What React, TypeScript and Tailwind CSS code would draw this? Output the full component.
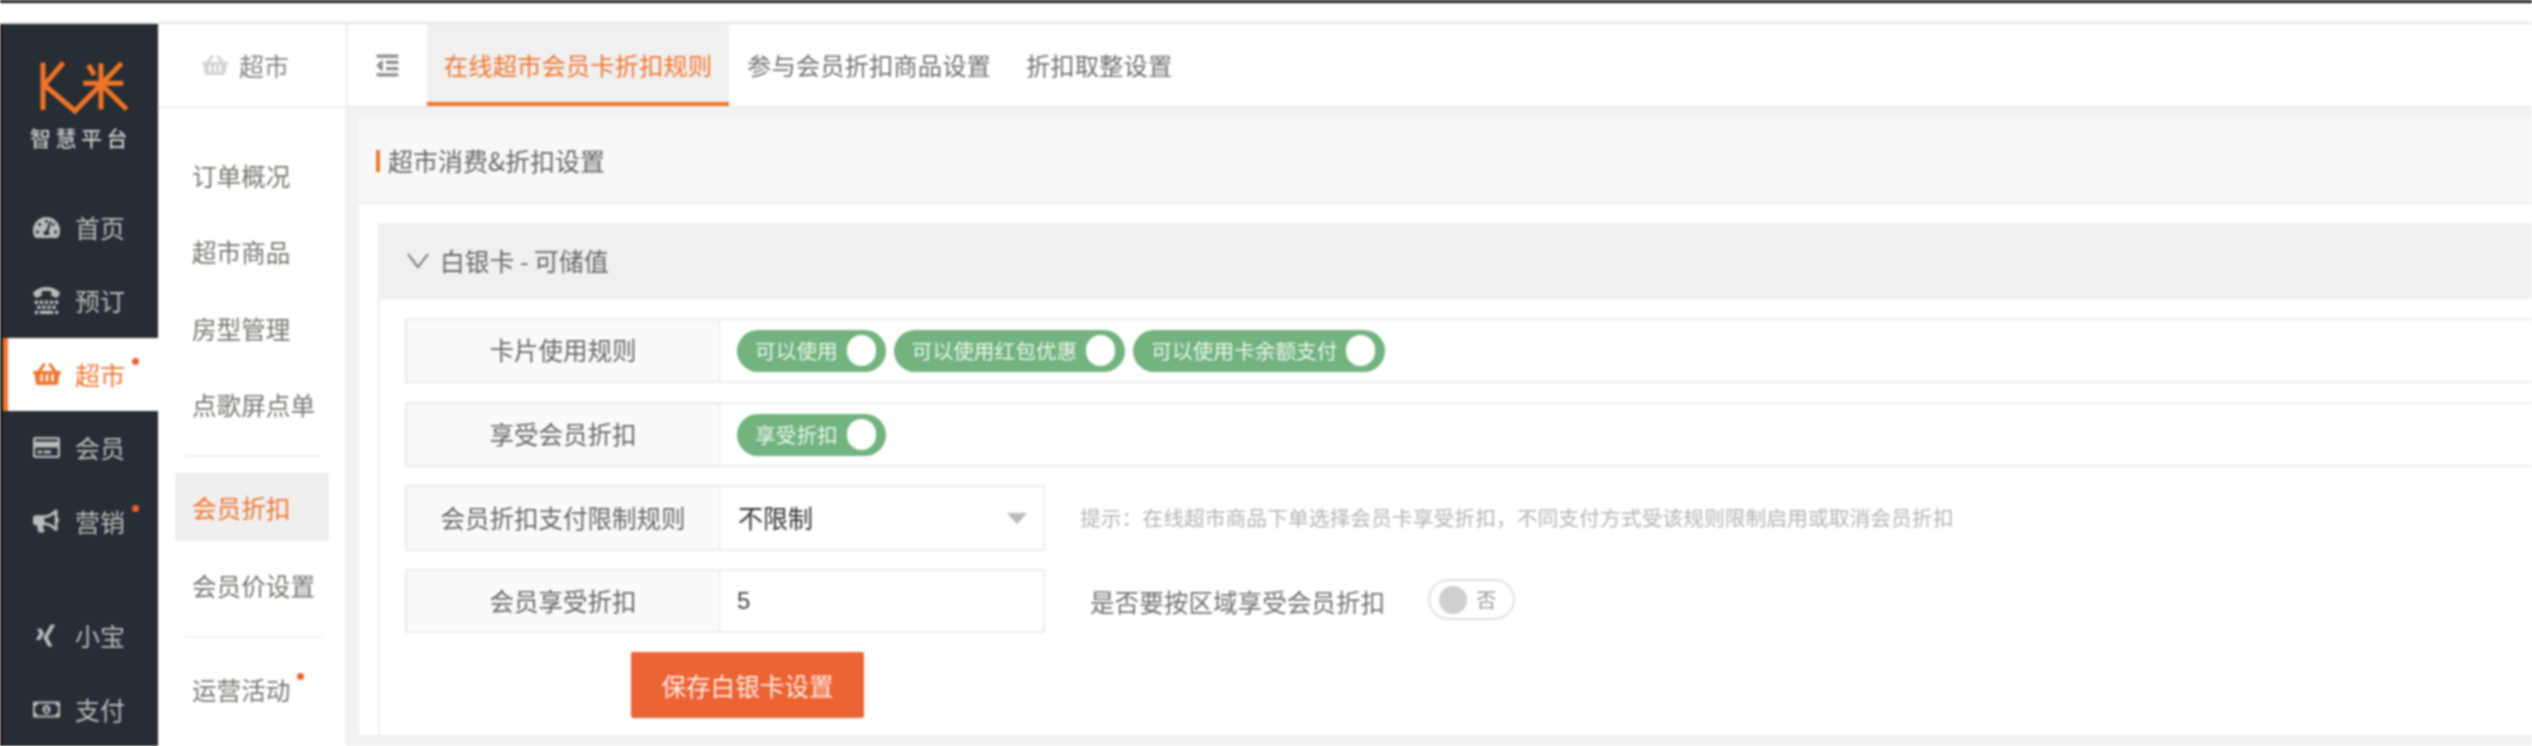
import React from "react";
import {
  FaBullhorn,
  FaOutdent,
  FaRegCreditCard,
  FaRegMoneyBillAlt,
  FaShoppingBasket,
  FaTachometerAlt,
  FaTty,
  FaXing,
} from "react-icons/fa";

const Dot = ({ className }: { className: string }) => (
  <span className={`absolute h-[7px] w-[7px] rounded-full bg-[#ee6030] ${className}`} />
);

const NavItem = ({
  icon,
  label,
  active,
  dot,
}: {
  icon: React.ReactNode;
  label: string;
  active?: boolean;
  dot?: boolean;
}) => (
  <div
    className={`flex h-[73.5px] items-center ${
      active ? "border-l-[5px] border-[#f0752f] bg-white pl-[25px] text-[#f0752f]" : "pl-[30px] text-[#b9bcbd]"
    }`}
  >
    <span className="flex w-[42px] shrink-0 items-center">{icon}</span>
    <span className="relative text-[25px] leading-none">
      {label}
      {dot && <Dot className="-right-[14px] -top-[4px]" />}
    </span>
  </div>
);

const SubItem = ({ label, dot }: { label: string; dot?: boolean }) => (
  <div className="flex h-[76.5px] items-center pl-[17px] text-[24.6px] text-[#75756f]">
    <span className="relative leading-none">
      {label}
      {dot && <Dot className="-right-[14px] -top-[4px]" />}
    </span>
  </div>
);

const Switch = ({ label }: { label: string }) => (
  <div className="flex h-[42px] items-center rounded-full bg-[#72b37f] pl-[18px] pr-[10px] text-[20.7px] text-[#eef6f0]">
    <span className="leading-none">{label}</span>
    <span className="ml-[9px] h-[31px] w-[29px] rounded-full bg-white" />
  </div>
);

const Label = ({ children }: { children: React.ReactNode }) => (
  <div className="flex w-[313px] shrink-0 items-center justify-center border-r border-[#e6e6e6] bg-[#fafafa] text-[24.5px] text-[#666]">
    {children}
  </div>
);

const App = () => {
  return (
    <div className="flex h-[746px] w-[2532px] flex-col overflow-hidden bg-white font-['Noto_Sans_CJK_SC','Liberation_Sans',sans-serif] blur-[0.9px]">
      <div className="h-[3px] shrink-0 bg-[#1c1c1c]" />
      <div className="h-[21px] shrink-0 border-b-2 border-[#e6e6e6] bg-white" />

      <div className="flex min-h-0 flex-1">
        <div className="w-[3px] shrink-0 bg-[#1c1c1c]" />

        {/* main nav */}
        <div className="w-[155px] shrink-0 bg-[#262d33]">
          <div className="h-[166.5px] pl-[22px] pt-[26px]">
            <svg width="120" height="65" viewBox="0 0 360 195" fill="none" stroke="#ee7427" strokeWidth="15">
              <path d="M54 38V180" />
              <path d="M58 105L115 38" />
              <path d="M58 105L150 183L290 40" />
              <path d="M175 100H295" />
              <path d="M228 40V178" />
              <path d="M190 45L208 75" />
              <path d="M225 100L305 178" />
            </svg>
            <div className="mt-[11px] w-[110px] whitespace-nowrap pl-[5px] text-[21px] font-medium leading-[22px] tracking-[4.5px] text-[#c9cccd]">
              智慧平台
            </div>
          </div>
          <NavItem icon={<FaTachometerAlt size={27} />} label="首页" />
          <NavItem icon={<FaTty size={27} />} label="预订" />
          <NavItem icon={<FaShoppingBasket size={28} />} label="超市" active dot />
          <NavItem icon={<FaRegCreditCard size={27} />} label="会员" />
          <NavItem icon={<FaBullhorn size={26} />} label="营销" dot />
          <div className="h-[41px]" />
          <NavItem icon={<FaXing size={25} />} label="小宝" />
          <NavItem icon={<FaRegMoneyBillAlt size={27} />} label="支付" />
        </div>

        {/* sub nav */}
        <div className="w-[190px] shrink-0 border-r-2 border-[#ececec] bg-white">
          <div className="flex h-[84px] items-center border-b-2 border-[#ececec] pl-[44px] text-[25px] text-[#848484]">
            <FaShoppingBasket size={26} className="text-[#d4d4d4]" />
            <span className="ml-[11px] leading-none">超市</span>
          </div>
          <div className="pl-[17px] pt-[29px]">
            <SubItem label="订单概况" />
            <SubItem label="超市商品" />
            <SubItem label="房型管理" />
            <SubItem label="点歌屏点单" />
            <div className="ml-[9px] mt-[12px] h-[2px] w-[138px] bg-[#f0f0f0]" />
            <div className="mt-[16px] flex h-[68px] w-[154px] items-center rounded-[3px] bg-[#efefef] pl-[17px] text-[24.6px] text-[#f0752f]">
              <span className="leading-none">会员折扣</span>
            </div>
            <div className="mt-[6px]">
              <SubItem label="会员价设置" />
            </div>
            <div className="ml-[9px] mt-[12px] h-[1px] w-[138px] bg-[#e6e6e6]" />
            <div className="mt-[15px]">
              <SubItem label="运营活动" dot />
            </div>
          </div>
        </div>

        {/* content */}
        <div className="flex min-w-0 flex-1 flex-col bg-[#f2f2f2]">
          <div className="flex h-[84px] shrink-0 items-stretch border-b-2 border-[#ececec] bg-white text-[24.4px] text-[#707073]">
            <div className="flex w-[79px] items-center pl-[27px] text-[#8c8c8c]">
              <FaOutdent size={25} />
            </div>
            <div className="flex w-[302px] items-center justify-center border-b-4 border-[#f0752f] bg-[#f0f0f0] pt-[4px] text-[#f0752f]">
              在线超市会员卡折扣规则
            </div>
            <div className="ml-[18px] flex items-center">参与会员折扣商品设置</div>
            <div className="ml-[35px] flex items-center">折扣取整设置</div>
          </div>

          <div className="ml-[11px] mt-[11px] flex min-h-0 flex-1 flex-col bg-white">
            <div className="flex h-[85px] shrink-0 items-center border-b-2 border-[#ececec] bg-[#f8f8f8] pl-[17px] text-[25px] text-[#666]">
              <span className="h-[22px] w-[4px] bg-[#f0752f]" />
              <span className="ml-[8px]">超市消费&amp;折扣设置</span>
            </div>

            <div className="ml-[19px] mt-[19px] flex flex-1 flex-col border-l-2 border-[#ececec]">
              <div className="flex h-[76px] shrink-0 items-center bg-[#f0f0f0] pl-[27px] text-[24.8px] text-[#666]">
                <svg width="22" height="18" viewBox="0 0 22 18" fill="none" stroke="#777" strokeWidth="2">
                  <path d="M1 2L11 15L21 2" />
                </svg>
                <span className="ml-[11px]">白银卡 - 可储值</span>
              </div>

              <div className="flex-1 pl-[25px] pt-[19px]">
                <div className="flex h-[65px] border-y-2 border-l-2 border-[#ececec]">
                  <Label>卡片使用规则</Label>
                  <div className="flex items-center gap-[8px] pl-[17px]">
                    <Switch label="可以使用" />
                    <Switch label="可以使用红包优惠" />
                    <Switch label="可以使用卡余额支付" />
                  </div>
                </div>
                <div className="mt-[19px] flex h-[65px] border-y-2 border-l-2 border-[#ececec]">
                  <Label>享受会员折扣</Label>
                  <div className="flex items-center pl-[17px]">
                    <Switch label="享受折扣" />
                  </div>
                </div>
                <div className="mt-[18px] flex h-[66px] items-stretch">
                  <div className="flex w-[640px] rounded-[2px] border-2 border-[#ececec]">
                    <Label>会员折扣支付限制规则</Label>
                    <div className="flex flex-1 items-center justify-between pl-[18px] pr-[16px] text-[25px] text-[#333]">
                      <span>不限制</span>
                      <span className="h-0 w-0 border-x-[10px] border-t-[11px] border-x-transparent border-t-[#b9b9b9]" />
                    </div>
                  </div>
                  <div className="ml-[35px] flex items-center text-[20.8px] text-[#b4b4b4]">
                    提示：在线超市商品下单选择会员卡享受折扣，不同支付方式受该规则限制启用或取消会员折扣
                  </div>
                </div>
                <div className="mt-[18px] flex h-[64px] items-stretch">
                  <div className="flex w-[640px] rounded-[2px] border-2 border-[#ececec]">
                    <Label>会员享受折扣</Label>
                    <div className="flex flex-1 items-center pl-[17px] font-['Liberation_Sans',sans-serif] text-[24px] text-[#444]">
                      5
                    </div>
                  </div>
                  <div className="ml-[45px] flex items-center text-[24.6px] text-[#707070]">是否要按区域享受会员折扣</div>
                  <div className="ml-[43px] mt-[10px] flex h-[41px] w-[87px] items-center rounded-full border-2 border-[#e2e2e2] pl-[9px] text-[20px] text-[#999]">
                    <span className="h-[28px] w-[28px] rounded-full bg-[#cfcfcf]" />
                    <span className="ml-[9px] leading-none">否</span>
                  </div>
                </div>
                <button className="ml-[226px] mt-[19px] block h-[66px] w-[233px] rounded-[2px] bg-[#ec6334] text-[24.6px] text-[#fdeee8]">
                  保存白银卡设置
                </button>
              </div>
            </div>
            <div className="h-[11px] shrink-0 border-t-2 border-[#ececec] bg-[#f0f0f0]" />
          </div>
        </div>
      </div>
    </div>
  );
};

export default App;
